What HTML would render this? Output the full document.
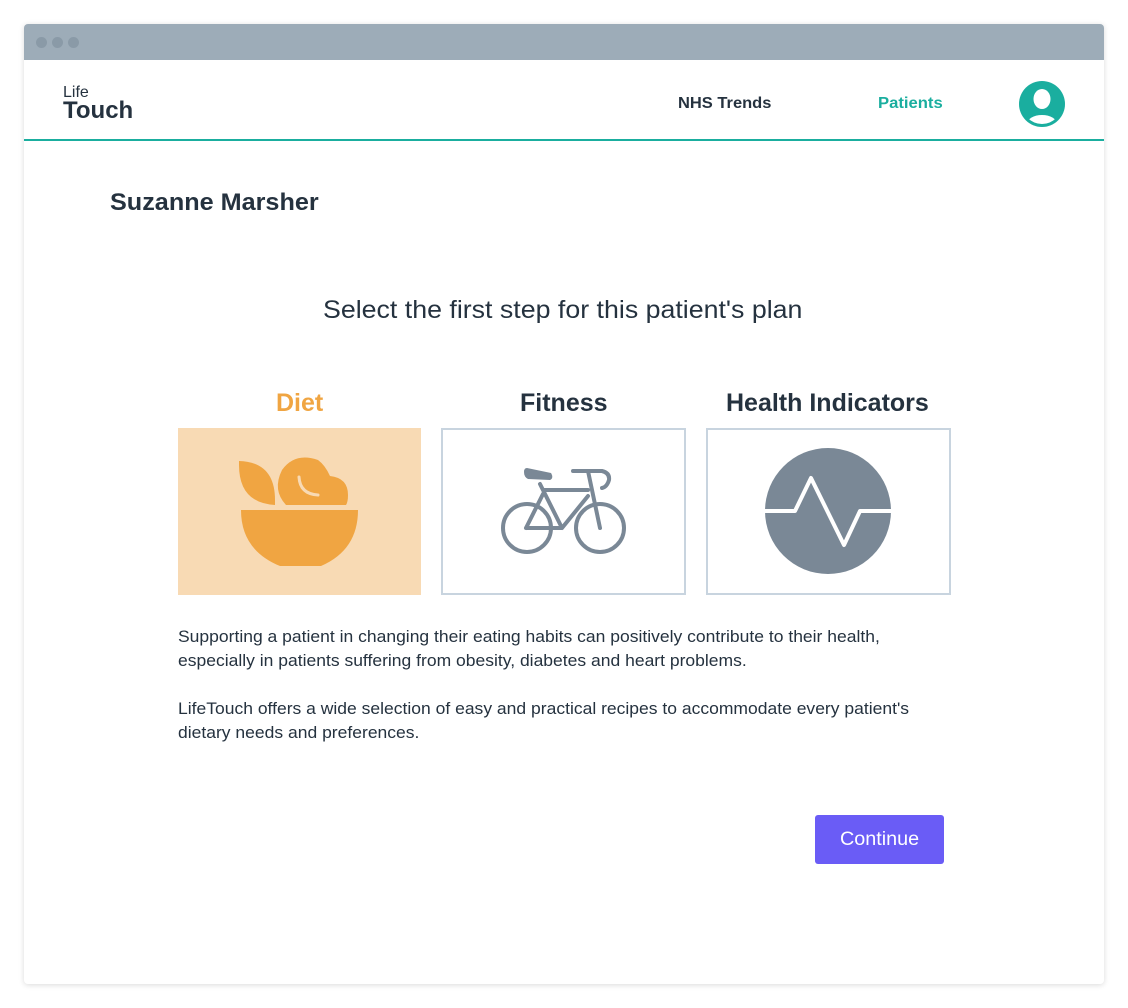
<!DOCTYPE html>
<html><head><meta charset="utf-8"><style>
html,body{margin:0;padding:0;background:#fff;width:1128px;height:1008px;overflow:hidden;font-family:"Liberation Sans",sans-serif;color:#25323f}
.win{position:absolute;left:24px;top:24px;width:1080px;height:960px;background:#fff;border-radius:4px;box-shadow:0 1px 6px rgba(0,0,0,0.15);overflow:hidden}
.bar{position:absolute;left:0;top:0;width:1080px;height:36px;background:#9dacb8}
.dot{position:absolute;top:13px;width:11px;height:11px;border-radius:50%;background:#8a9aa7}
.t{position:absolute;white-space:nowrap;transform-origin:0 0}
.card{position:absolute;top:428px;height:167px;box-sizing:border-box}
</style></head><body>
<div class="win">
<div class="bar"><div class="dot" style="left:12px"></div><div class="dot" style="left:28px"></div><div class="dot" style="left:44px"></div></div>
<div style="position:absolute;left:0;top:115px;width:1080px;height:2px;background:#1aae9f"></div>
</div>
<div class="t" style="left:63px;top:84px;font-size:16px;color:#25323f">Life</div>
<div class="t" style="left:63px;top:97px;font-size:24px;font-weight:bold">Touch</div>
<div class="t" style="left:678px;top:95px;font-size:16px;font-weight:bold;transform:scaleX(1.03)">NHS Trends</div>
<div class="t" style="left:878px;top:95px;font-size:16px;font-weight:bold;color:#1aae9f;transform:scaleX(1.04)">Patients</div>
<svg style="position:absolute;left:1019px;top:81px" width="46" height="46" viewBox="0 0 46 46"><defs><clipPath id="c"><circle cx="23" cy="23" r="20"/></clipPath></defs><circle cx="23" cy="23" r="23" fill="#1aae9f"/><ellipse cx="23" cy="18" rx="8.5" ry="10" fill="#fff"/><g clip-path="url(#c)"><ellipse cx="23" cy="43" rx="15" ry="9" fill="#fff"/></g></svg>
<div class="t" style="left:110px;top:189px;font-size:24px;font-weight:bold;transform:scaleX(1.05)">Suzanne Marsher</div>
<div class="t" style="left:323px;top:296px;font-size:25px;transform:scaleX(1.07)">Select the first step for this patient's plan</div>
<div class="t" style="left:276px;top:389px;font-size:25px;font-weight:bold;color:#f0a542">Diet</div>
<div class="t" style="left:520px;top:389px;font-size:25px;font-weight:bold">Fitness</div>
<div class="t" style="left:726px;top:389px;font-size:25px;font-weight:bold">Health Indicators</div>
<div class="card" style="left:178px;width:243px;background:#f8dab4"></div>
<div class="card" style="left:441px;width:245px;border:2px solid #c8d4df"></div>
<div class="card" style="left:706px;width:245px;border:2px solid #c8d4df"></div>
<svg style="position:absolute;left:0;top:0" width="1128" height="1008">
<path d="M239 461 Q275 462 275 500 L275 505 Q239 503 239 465 Z" fill="#f0a542"/>
<path d="M286 505 Q272 490 282 470 Q295 452 318 460 Q325 465 330 476 Q348 478 348 495 Q348 502 346 505 Z" fill="#f0a542"/>
<path d="M299 477 Q300 494 318 495" fill="none" stroke="#f8dab4" stroke-width="3" stroke-linecap="round"/>
<path d="M241 510 L358 510 Q358 550 321 566 L280 566 Q241 550 241 510 Z" fill="#f0a542"/>
<g fill="none" stroke="#7a8896" stroke-width="4" stroke-linecap="round" stroke-linejoin="round">
<circle cx="527" cy="528" r="24"/><circle cx="600" cy="528" r="24"/>
<path d="M526 528 L543 494 M540 484 L562 528 L526 528 M544 490 L588 490 M562 528 L588 496 M588 471 L600 528 M573 471 L602 471 Q610 473 609 480 Q607 487 602 488"/>
</g>
<path d="M527 468 L551 473 Q554 478 550 480 L528 479 Q524 477 524 472 Q524 468 527 468Z" fill="#7a8896"/>
<circle cx="828" cy="511" r="63" fill="#7a8896"/>
<path d="M765 511 L795 511 L811 478 L844 545 L860 511 L891 511" fill="none" stroke="#fff" stroke-width="4" stroke-linejoin="round"/>
</svg>
<div class="t" style="left:178px;top:625px;font-size:17px;line-height:24px;transform:scaleX(1.03)">Supporting a patient in changing their eating habits can positively contribute to their health,<br>especially in patients suffering from obesity, diabetes and heart problems.<br><br>LifeTouch offers a wide selection of easy and practical recipes to accommodate every patient's<br>dietary needs and preferences.</div>
<div style="position:absolute;left:815px;top:815px;width:129px;height:49px;background:#6a5cf6;border-radius:3px"></div>
<div class="t" style="left:840px;top:829px;font-size:19px;color:#fff;transform:scaleX(1.04)">Continue</div>
</body></html>
